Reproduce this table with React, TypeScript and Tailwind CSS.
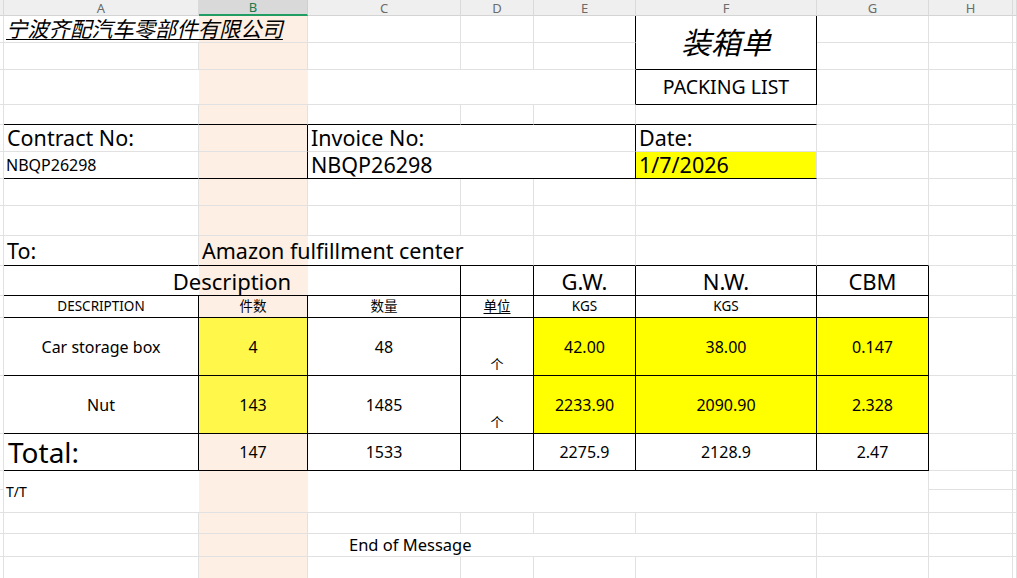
import React from "react";

type Cell = {
  r: number;
  c: number;
  cs?: number;
  rs?: number;
  t?: React.ReactNode;
  br?: boolean; // black right border
  bb?: boolean; // black bottom border
  bg?: string;
  cls?: string;
};

const COL_START = [
  "",
  "col-start-1",
  "col-start-2",
  "col-start-3",
  "col-start-4",
  "col-start-5",
  "col-start-6",
  "col-start-7",
  "col-start-8",
  "col-start-9",
  "col-start-10",
];
const ROW_START = [
  "",
  "row-start-1",
  "row-start-2",
  "row-start-3",
  "row-start-4",
  "row-start-5",
  "row-start-6",
  "row-start-7",
  "row-start-8",
  "row-start-9",
  "row-start-10",
  "row-start-11",
  "row-start-12",
  "row-start-13",
  "row-start-14",
  "row-start-15",
  "row-start-16",
  "row-start-17",
  "row-start-18",
  "row-start-19",
  "row-start-20",
];
const COL_SPAN = ["", "col-span-1", "col-span-2", "col-span-3", "col-span-4", "col-span-5", "col-span-6", "col-span-7"];
const ROW_SPAN = ["", "row-span-1", "row-span-2"];

// grid column index: 1 = row-header strip, 2 = A ... 10 = I
const A = 2, B = 3, C = 4, D = 5, E = 6, F = 7, G = 8;

const YELLOW = "bg-[#ffff00]";
const YELLOW_SEL = "bg-[#fff84a]";

const head = "justify-center items-center text-[22px]";
const sub = "justify-center items-center text-[13.5px]";
const num = "justify-center items-center text-[16px]";
const unit = "justify-center items-end pb-[4px] text-[13px]";
const left20 = "items-center pl-[3px] text-[21.5px]";

const cells: Cell[] = [
  // title block
  {
    r: 1, c: A, cs: 2,
    t: <span className="italic underline decoration-1 underline-offset-[2px]">宁波齐配汽车零部件有限公司</span>,
    cls: "items-center pl-[2px] text-[21.3px]",
  },
  { r: 1, c: E, br: true },
  { r: 1, c: F, rs: 2, t: <span className="italic">装箱单</span>, br: true, bb: true, cls: "justify-center items-center text-[30px]" },
  { r: 2, c: E, br: true },
  { r: 3, c: A, cs: 5, br: true },
  { r: 3, c: F, t: "PACKING LIST", br: true, bb: true, cls: "justify-center items-center text-[19.5px]" },

  // top of contract box
  { r: 4, c: A, bb: true },
  { r: 4, c: B, bb: true },
  { r: 4, c: C, bb: true },
  { r: 4, c: D, bb: true },
  { r: 4, c: E, bb: true },
  { r: 4, c: F, bb: true },

  { r: 5, c: A, t: "Contract No:", cls: left20 },
  { r: 5, c: B, br: true },
  { r: 5, c: C, cs: 3, t: "Invoice No:", br: true, cls: left20 },
  { r: 5, c: F, t: "Date:", cls: left20 },

  { r: 6, c: A, t: "NBQP26298", bb: true, cls: "items-center pl-[2px] text-[16px]" },
  { r: 6, c: B, br: true, bb: true },
  { r: 6, c: C, cs: 3, t: "NBQP26298", br: true, bb: true, cls: left20 },
  { r: 6, c: F, t: "1/7/2026", bb: true, bg: YELLOW, cls: left20 },

  // consignee
  { r: 9, c: A, t: "To:", bb: true, cls: left20 },
  { r: 9, c: B, cs: 3, t: "Amazon fulfillment center", bb: true, cls: left20 },
  { r: 9, c: E, bb: true },
  { r: 9, c: F, bb: true },
  { r: 9, c: G, bb: true },

  // table head
  { r: 10, c: A, cs: 3, t: "Description", br: true, bb: true, cls: head },
  { r: 10, c: D, br: true, bb: true },
  { r: 10, c: E, t: "G.W.", br: true, bb: true, cls: head },
  { r: 10, c: F, t: "N.W.", br: true, bb: true, cls: head },
  { r: 10, c: G, t: "CBM", br: true, bb: true, cls: head },

  { r: 11, c: A, t: "DESCRIPTION", br: true, bb: true, cls: sub },
  { r: 11, c: B, t: "件数", br: true, bb: true, cls: sub },
  { r: 11, c: C, t: "数量", br: true, bb: true, cls: sub },
  { r: 11, c: D, t: <span className="underline underline-offset-[2px]">单位</span>, br: true, bb: true, cls: sub },
  { r: 11, c: E, t: "KGS", br: true, bb: true, cls: sub },
  { r: 11, c: F, t: "KGS", br: true, bb: true, cls: sub },
  { r: 11, c: G, br: true, bb: true },

  // lines
  { r: 12, c: A, t: "Car storage box", br: true, bb: true, cls: num },
  { r: 12, c: B, t: "4", br: true, bb: true, bg: YELLOW_SEL, cls: num },
  { r: 12, c: C, t: "48", br: true, bb: true, cls: num },
  { r: 12, c: D, t: "个", br: true, bb: true, cls: unit },
  { r: 12, c: E, t: "42.00", br: true, bb: true, bg: YELLOW, cls: num },
  { r: 12, c: F, t: "38.00", br: true, bb: true, bg: YELLOW, cls: num },
  { r: 12, c: G, t: "0.147", br: true, bb: true, bg: YELLOW, cls: num },

  { r: 13, c: A, t: "Nut", br: true, bb: true, cls: num },
  { r: 13, c: B, t: "143", br: true, bb: true, bg: YELLOW_SEL, cls: num },
  { r: 13, c: C, t: "1485", br: true, bb: true, cls: num },
  { r: 13, c: D, t: "个", br: true, bb: true, cls: unit },
  { r: 13, c: E, t: "2233.90", br: true, bb: true, bg: YELLOW, cls: num },
  { r: 13, c: F, t: "2090.90", br: true, bb: true, bg: YELLOW, cls: num },
  { r: 13, c: G, t: "2.328", br: true, bb: true, bg: YELLOW, cls: num },

  { r: 14, c: A, t: "Total:", br: true, bb: true, cls: "items-center pl-[4px] text-[28px]" },
  { r: 14, c: B, t: "147", br: true, bb: true, cls: num },
  { r: 14, c: C, t: "1533", br: true, bb: true, cls: num },
  { r: 14, c: D, br: true, bb: true },
  { r: 14, c: E, t: "2275.9", br: true, bb: true, cls: num },
  { r: 14, c: F, t: "2128.9", br: true, bb: true, cls: num },
  { r: 14, c: G, t: "2.47", br: true, bb: true, cls: num },

  // footer
  { r: 15, c: A, cs: 7, rs: 2, t: "T/T", cls: "items-center pl-[2px] text-[14px]" },
  { r: 18, c: C, cs: 4, t: "End of Message", cls: "items-center pl-[41px] text-[16.5px]" },
];

const LETTERS = ["", "A", "B", "C", "D", "E", "F", "G", "H", ""];

function SheetCell({ cell }: { cell: Cell }) {
  const { r, c, cs = 1, rs = 1, t, br, bb, bg, cls = "" } = cell;
  return (
    <div
      className={`flex whitespace-nowrap leading-none border-r border-b ${COL_START[c]} ${ROW_START[r + 1]} ${COL_SPAN[cs]} ${ROW_SPAN[rs]} ${
        br ? "border-r-black" : "border-r-[#e1e1e1]"
      } ${bb ? "border-b-black" : "border-b-[#e1e1e1]"} ${bg ?? ""} ${cls}`}
    >
      {t}
    </div>
  );
}

export default function App() {
  const covered = new Set<string>();
  cells.forEach((cell) => {
    for (let dr = 0; dr < (cell.rs ?? 1); dr++)
      for (let dc = 0; dc < (cell.cs ?? 1); dc++) covered.add(`${cell.r + dr}-${cell.c + dc}`);
  });

  const fillers: Cell[] = [];
  for (let r = 1; r <= 19; r++)
    for (let c = 1; c <= 10; c++) if (!covered.has(`${r}-${c}`)) fillers.push({ r, c });

  return (
    <div className="w-[1017px] h-[578px] overflow-hidden bg-white text-black font-['Noto_Sans','Noto_Sans_CJK_SC',sans-serif]">
      <div className="grid grid-cols-[4px_195px_109px_153px_73px_102px_181px_112px_84px_1fr] grid-rows-[16px_27px_27px_35px_20px_27px_27px_27px_30px_30px_30px_22px_58px_58px_37px_19px_23px_21px_23px_30px]">
        {/* column headers */}
        {LETTERS.map((l, i) =>
          l === "B" ? (
            <div
              key={i}
              className="col-start-3 row-start-1 flex items-center justify-center bg-[#d9d9d9] border-r border-r-[#cfcfcf] border-b-2 border-b-[#1f9d63] text-[13px] leading-[14px] text-[#1d7a4c]"
            >
              {l}
            </div>
          ) : (
            <div
              key={i}
              className={`${COL_START[i + 1]} row-start-1 flex items-center justify-center bg-[#efefef] border-r border-r-[#dadada] border-b border-b-[#d4d4d4] text-[13px] leading-[14px] text-[#6b6b6b]`}
            >
              {l}
            </div>
          )
        )}

        {/* selected column tint */}
        <div className="col-start-3 row-start-2 row-span-19 bg-[#fdefe3]" />

        {fillers.map((cell) => (
          <SheetCell key={`f-${cell.r}-${cell.c}`} cell={cell} />
        ))}
        {cells.map((cell) => (
          <SheetCell key={`c-${cell.r}-${cell.c}`} cell={cell} />
        ))}
      </div>
    </div>
  );
}
